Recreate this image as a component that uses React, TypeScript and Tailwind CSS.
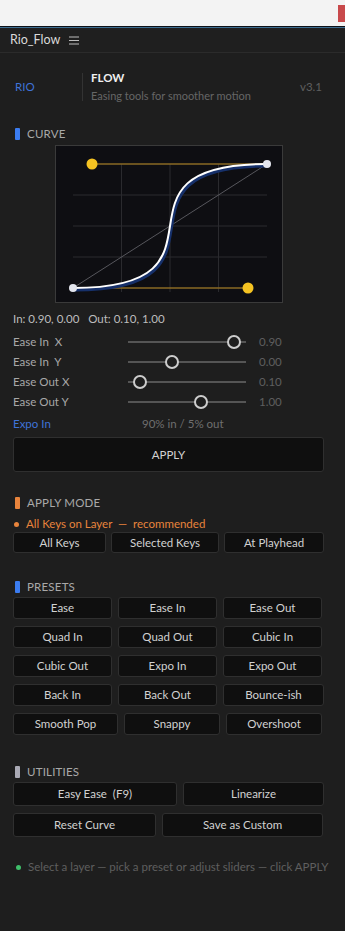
import React from 'react';

const FONT = { fontFamily: 'Lato, "Noto Sans", Arial, sans-serif' };

function SectionTitle({ label, color }: { label: string; color: string }) {
  return (
    <div className="flex items-center gap-[7px] pl-[15px] h-[14px]">
      <span className={`block w-[5px] h-[12px] rounded-[1px] ${color}`} />
      <span className="text-[11.5px] leading-none text-[#a9a9a9] tracking-[0.2px]">{label}</span>
    </div>
  );
}

function Btn({ label, className = '' }: { label: string; className?: string }) {
  return (
    <button
      className={`flex items-center justify-center rounded-[3px] border border-[#2f2f2f] bg-[#0f0f0f] text-[11.5px] text-[#d2d2d2] ${className}`}
    >
      {label}
    </button>
  );
}

const sliders = [
  { label: 'Ease In  X', pos: 0.9, value: '0.90' },
  { label: 'Ease In  Y', pos: 0.37, value: '0.00' },
  { label: 'Ease Out X', pos: 0.1, value: '0.10' },
  { label: 'Ease Out Y', pos: 0.62, value: '1.00' },
];

function SliderRow({ label, pos, value }: { label: string; pos: number; value: string }) {
  return (
    <div className="flex items-center h-[20px]">
      <div className="w-[128px] pl-[13px] text-[11.5px] text-[#a8a8a8] whitespace-pre">{label}</div>
      <div className="relative w-[118px] h-[14px] flex items-center">
        <div className="w-full h-[1.5px] bg-[#555]" />
        <div
          className="absolute top-0 w-[14px] h-[14px] -ml-[7px] rounded-full border-2 border-[#cdcdcd] bg-[#1e1e1e]"
          style={{ left: `${pos * 100}%` }}
        />
      </div>
      <div className="pl-[13px] text-[11.5px] text-[#5f5f5f]">{value}</div>
    </div>
  );
}

function CurveGraph() {
  const curve = 'M17 142 C192 142 36 18 211 18';
  return (
    <div className="ml-[55px] w-[228px] h-[158px] border border-[#3a3a3a] bg-[#0e0e12]">
      <svg width="226" height="156" viewBox="0 0 226 156">
        <g stroke="#2a2a2e" strokeWidth="1">
          <line x1="65.5" y1="18" x2="65.5" y2="146" />
          <line x1="114" y1="18" x2="114" y2="146" />
          <line x1="162.5" y1="18" x2="162.5" y2="146" />
          <line x1="17" y1="49" x2="211" y2="49" />
          <line x1="17" y1="80" x2="211" y2="80" />
          <line x1="17" y1="111" x2="211" y2="111" />
        </g>
        <line x1="17" y1="142" x2="211" y2="18" stroke="#6a6a70" strokeWidth="0.8" />
        <line x1="17" y1="142" x2="192" y2="142" stroke="#8a6a24" strokeWidth="1.4" />
        <line x1="36" y1="18" x2="211" y2="18" stroke="#8a6a24" strokeWidth="1.4" />
        <path d={curve} fill="none" stroke="#16306a" strokeWidth="3.5" transform="translate(1.2 1.8)" />
        <path d={curve} fill="none" stroke="#ffffff" strokeWidth="2" />
        <circle cx="17" cy="142" r="4" fill="#e4e6ee" />
        <circle cx="211" cy="18" r="4" fill="#e4e6ee" />
        <circle cx="36" cy="18" r="5.5" fill="#f5c322" />
        <circle cx="192" cy="142" r="5.5" fill="#f5c322" />
      </svg>
    </div>
  );
}

export default function App() {
  return (
    <div className="w-[345px] min-h-[931px] bg-[#1e1e1e]" style={FONT}>
      {/* browser strip */}
      <div className="h-[26px] bg-[#f3f3f3] flex justify-end">
        <div className="mt-[5px] w-[7px] h-[17px] bg-[#c8494b]" />
      </div>
      <div className="h-px bg-[#0d1117]" />
      <div className="h-px bg-[#3d6e91]" />

      {/* tab */}
      <div className="h-[25px] flex items-center gap-[9px] pl-[10px] border-b border-[#2b2b2b] bg-[#1f1f1f]">
        <span className="text-[12.5px] text-[#dadada]">Rio_Flow</span>
        <svg width="10" height="9" viewBox="0 0 10 9" stroke="#bdbdbd" strokeWidth="1">
          <line x1="0" y1="1" x2="10" y2="1" />
          <line x1="0" y1="4.5" x2="10" y2="4.5" />
          <line x1="0" y1="8" x2="10" y2="8" />
        </svg>
      </div>

      {/* header */}
      <div className="flex items-center pt-[16px] pb-[8px]">
        <div className="w-[82px] pl-[15px] text-[11.5px] text-[#3f73d8]">RIO</div>
        <div className="w-px h-[28px] bg-[#333]" />
        <div className="pl-[8px] flex flex-col">
          <span className="text-[11.5px] leading-[18px] font-bold text-[#f0f0f0]">FLOW</span>
          <span className="text-[11px] leading-[18px] text-[#666]">Easing tools for smoother motion</span>
        </div>
        <div className="ml-auto pr-[23px] text-[11.5px] text-[#5e5e5e]">v3.1</div>
      </div>

      {/* curve */}
      <div className="pt-[14px]">
        <SectionTitle label="CURVE" color="bg-[#3b7cf0]" />
        <div className="mt-[4px]">
          <CurveGraph />
        </div>
        <div className="mt-[8px] h-[16px] leading-[16px] pl-[13px] text-[11.5px] text-[#bdbdbd] whitespace-pre">
          {'In: 0.90, 0.00   Out: 0.10, 1.00'}
        </div>
        <div className="mt-[5px] flex flex-col">
          {sliders.map((s) => (
            <SliderRow key={s.label} {...s} />
          ))}
        </div>
        <div className="flex items-center mt-[2px] h-[20px]">
          <span className="w-[142px] pl-[13px] text-[11.5px] text-[#3f73d8]">Expo In</span>
          <span className="text-[11.5px] text-[#6f6f6f]">90% in / 5% out</span>
        </div>
        <div className="px-[13px] mt-[3px]">
          <Btn label="APPLY" className="w-[311px] h-[35px] bg-[#0d0d0d]" />
        </div>
      </div>

      {/* apply mode */}
      <div className="pt-[24px]">
        <SectionTitle label="APPLY MODE" color="bg-[#e8843c]" />
        <div className="mt-[7px] h-[14px] pl-[14px] flex items-center gap-[7px] text-[11.5px] text-[#e8843c] whitespace-pre">
          <span className="w-[5px] h-[5px] rounded-full bg-[#e8843c]" />
          <span>{'All Keys on Layer  —  recommended'}</span>
        </div>
        <div className="mt-[1px] pl-[13px] w-[324px] flex gap-[5px]">
          <Btn label="All Keys" className="w-[93px] h-[21px]" />
          <Btn label="Selected Keys" className="w-[108px] h-[21px]" />
          <Btn label="At Playhead" className="flex-1 h-[21px]" />
        </div>
      </div>

      {/* presets */}
      <div className="pt-[27px]">
        <SectionTitle label="PRESETS" color="bg-[#3b7cf0]" />
        <div className="mt-[3px] px-[13px] flex flex-col gap-[7px]">
          <div className="flex gap-[6px]">
            <Btn label="Ease" className="w-[99px] h-[22px]" />
            <Btn label="Ease In" className="w-[99px] h-[22px]" />
            <Btn label="Ease Out" className="w-[99px] h-[22px]" />
          </div>
          <div className="flex gap-[6px]">
            <Btn label="Quad In" className="w-[99px] h-[22px]" />
            <Btn label="Quad Out" className="w-[99px] h-[22px]" />
            <Btn label="Cubic In" className="w-[99px] h-[22px]" />
          </div>
          <div className="flex gap-[6px]">
            <Btn label="Cubic Out" className="w-[99px] h-[22px]" />
            <Btn label="Expo In" className="w-[99px] h-[22px]" />
            <Btn label="Expo Out" className="w-[99px] h-[22px]" />
          </div>
          <div className="flex gap-[6px]">
            <Btn label="Back In" className="w-[99px] h-[22px]" />
            <Btn label="Back Out" className="w-[99px] h-[22px]" />
            <Btn label="Bounce-ish" className="w-[101px] h-[22px]" />
          </div>
          <div className="flex gap-[6px]">
            <Btn label="Smooth Pop" className="w-[105px] h-[22px]" />
            <Btn label="Snappy" className="w-[96px] h-[22px]" />
            <Btn label="Overshoot" className="w-[96px] h-[22px]" />
          </div>
        </div>
      </div>

      {/* utilities */}
      <div className="pt-[30px]">
        <SectionTitle label="UTILITIES" color="bg-[#a9a9b4]" />
        <div className="mt-[3px] px-[13px] flex flex-col gap-[7px]">
          <div className="flex gap-[6px] w-[311px]">
            <Btn label="Easy Ease  (F9)" className="w-[164px] h-[24px] whitespace-pre" />
            <Btn label="Linearize" className="flex-1 h-[24px]" />
          </div>
          <div className="flex gap-[6px]">
            <Btn label="Reset Curve" className="w-[143px] h-[24px]" />
            <Btn label="Save as Custom" className="w-[161px] h-[24px]" />
          </div>
        </div>
      </div>

      {/* status */}
      <div className="mt-[23px] h-[14px] pl-[16px] flex items-center gap-[7px]">
        <span className="w-[5px] h-[5px] rounded-full bg-[#3fbf6a]" />
        <span className="text-[11.5px] text-[#5f5f5f]">
          Select a layer — pick a preset or adjust sliders — click APPLY
        </span>
      </div>
    </div>
  );
}
